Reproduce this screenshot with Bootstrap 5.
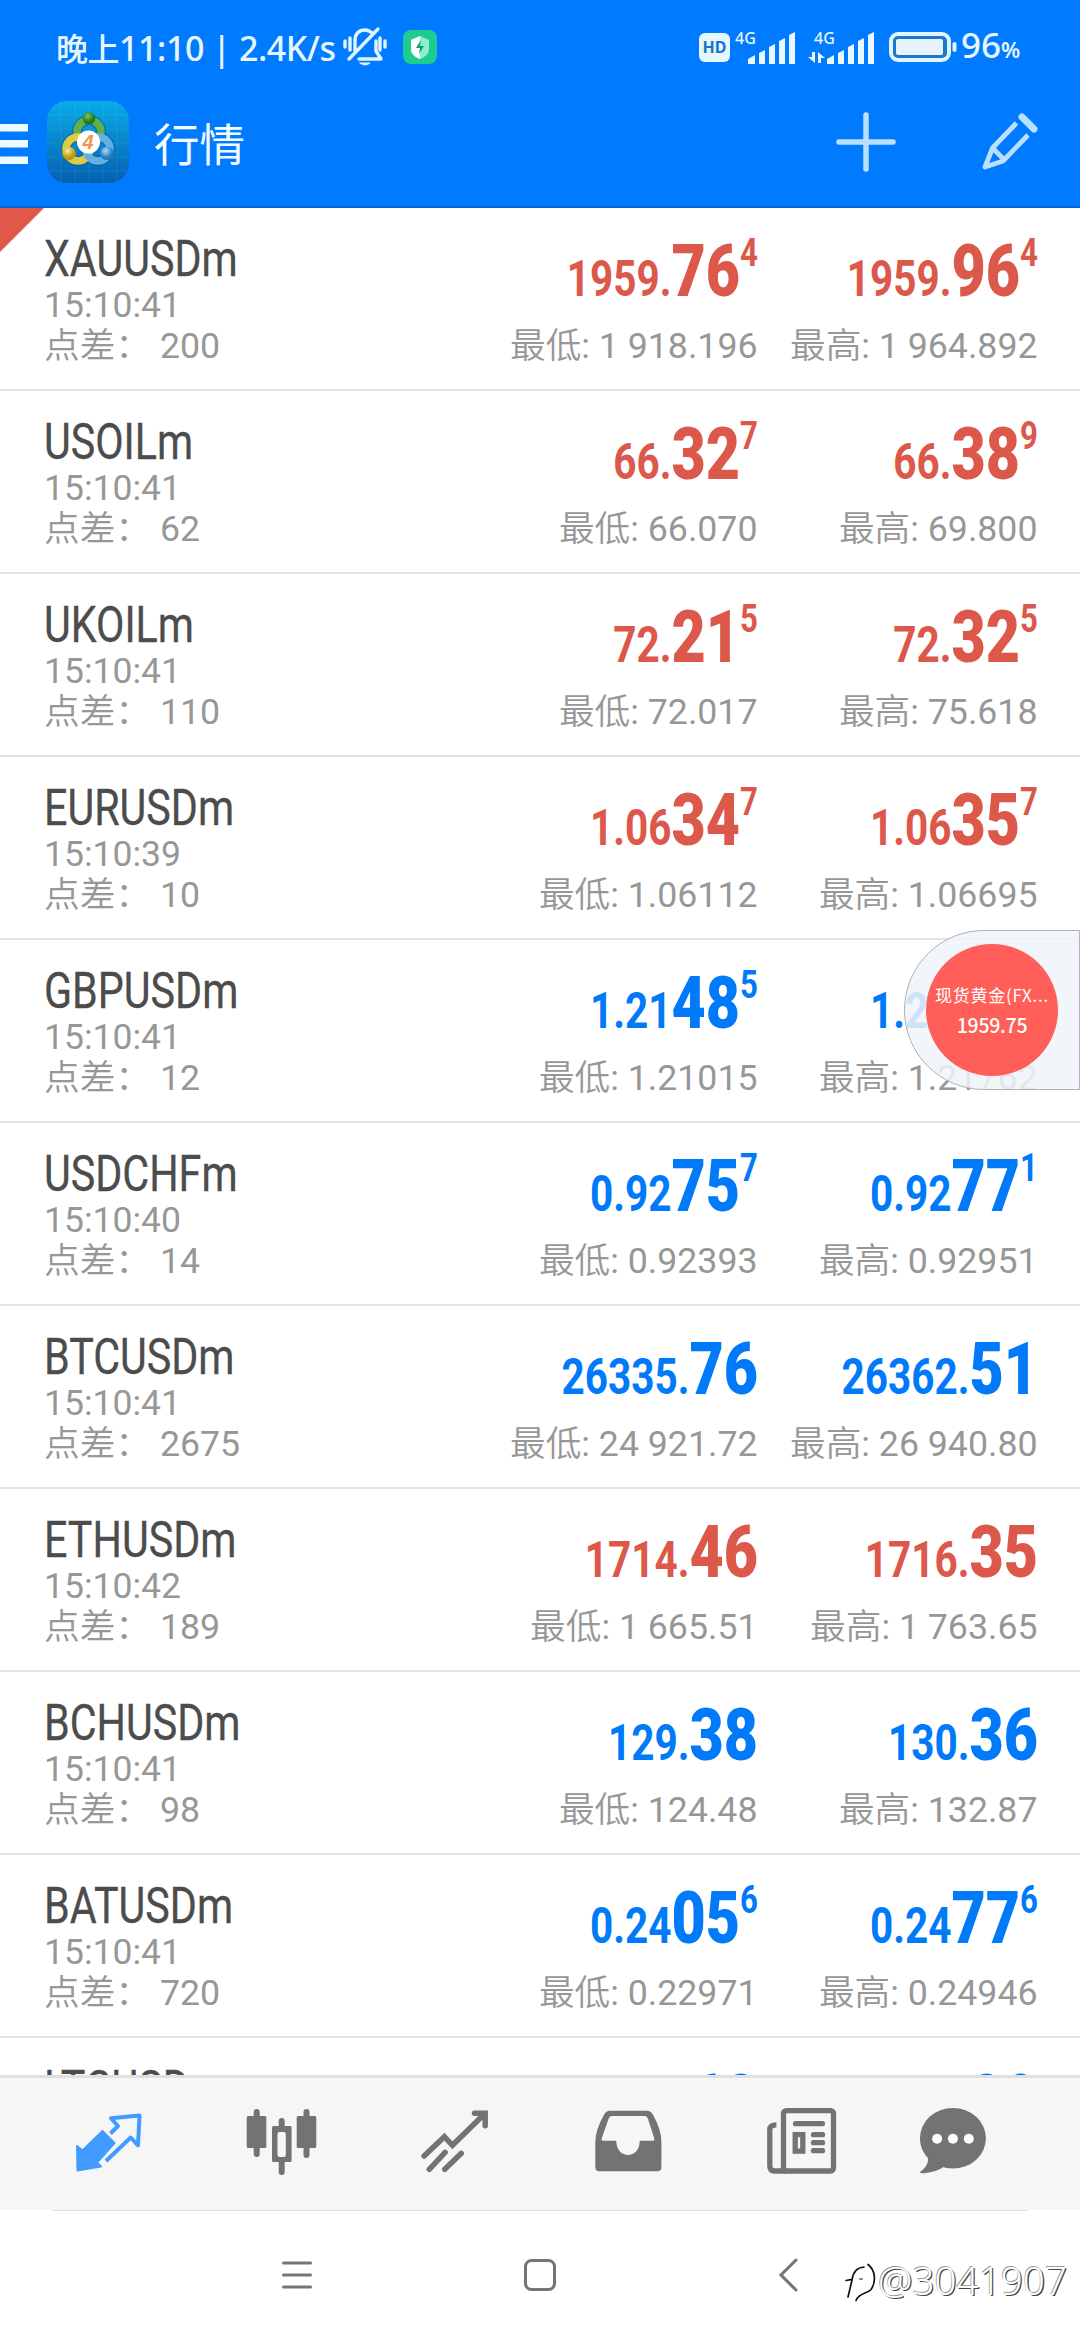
<!DOCTYPE html>
<html lang="zh-CN">
<head>
<meta charset="utf-8">
<meta name="viewport" content="width=device-width, initial-scale=1">
<title>行情</title>
<link href="https://cdn.jsdelivr.net/npm/bootstrap@5.3.0/dist/css/bootstrap.min.css" rel="stylesheet">
<style>
html,body{height:100%}
body{font-family:Roboto,"Noto Sans CJK SC",sans-serif;background:#fff;overflow:hidden;width:1080px}
svg{display:block;flex:none;overflow:visible}
.screen{height:2340px;width:1080px}
.topbar{background:#007aff;height:208px;color:#e6f7ff;flex:none;box-shadow:inset 0 -2px 1px #0a63d0}
.statusbar{height:94px;padding-left:56px}
.clock{font:500 34px/94px "Noto Sans","Noto Sans CJK SC",sans-serif;width:287px;white-space:pre;letter-spacing:-.45px}
.clock .cjk{font-family:"Noto Sans CJK SC",sans-serif;font-size:32px}
.net{font:500 16px/16px "Noto Sans",sans-serif}
.batt{font:500 35px/94px "Noto Sans",sans-serif;margin-left:4px}
.batt .pct{font-size:22px;font-weight:600}
.appbar{height:96px}
.app-title{font-size:45.5px;line-height:96px;font-family:"Noto Sans CJK SC",sans-serif;color:#f4fbff;margin-left:25px}
.quotes{flex:none;height:1867px;overflow:hidden}
.quote{height:183px;border-bottom:2px solid #e2e2e2;padding:0 42.5px 0 44px;color:#979797;font-size:35.5px;flex:none}
.quote.flagged::before{content:"";position:absolute;left:0;top:0;border:22px solid transparent;border-top-color:#e0584a;border-left-color:#e0584a}
.info{width:387px;padding-top:23px;white-space:pre}
.sym{font-size:50px;line-height:56px;color:#4c4c4c;transform:scaleX(.825);transform-origin:0 0;-webkit-text-stroke:.3px #4c4c4c}
.tm{line-height:36px}
.rng{line-height:46px;font-weight:400;font-size:35.7px;white-space:pre}
.rng span{font-weight:350}
.side{width:280px;padding-top:29px;text-align:right}
.quote .first{margin-left:auto}
.px{font-size:50px;line-height:84px;margin-bottom:2px;font-weight:700;transform:scaleX(.81);transform-origin:100% 0;white-space:nowrap}
.px b,.px i{line-height:0;font-style:normal}
.px b{font-size:73px}
.px i{font-size:38.5px;vertical-align:30px}
.dn{color:#db584a}.up{color:#007af8}
.tabs{flex:none;height:135px;border-top:3px solid #e0e0e0;background:#f6f6f6;padding-left:22px;color:#737373}
.tab-item{width:173px}
.tab-item:last-child{width:132px}
.sysnav{height:130px;color:#757575}
.hair{width:974px;height:1px;background:#ddd}
.floater{position:absolute;left:904px;top:930px;width:176px;height:160px;border:1px solid #adb1b8;border-radius:80px 0 0 80px;background:rgba(240,243,249,.86)}
.ball{width:132px;height:132px;margin:13px 0 0 21px;background:#ff5f58;color:#fff;white-space:nowrap;font-family:"Noto Sans CJK SC",sans-serif}
.ball .t1{font-size:17px;line-height:24px;letter-spacing:.75px}
.ball .t2{font-size:19.5px;line-height:24px;margin-top:6px;font-weight:500;letter-spacing:-.3px}
.wm{position:absolute;left:840px;top:2253px;font:300 38.7px/54px "Noto Sans",sans-serif;color:#fff;text-shadow:-.7px -.7px 0 #999,1.3px 1.3px 0 #444;white-space:nowrap}
</style>
<script src="https://cdn.jsdelivr.net/npm/bootstrap@5.3.0/dist/js/bootstrap.bundle.min.js"></script>
</head>
<body>
<div class="screen d-flex flex-column position-relative">
<header class="topbar">
  <div class="statusbar d-flex align-items-center">
    <div class="clock"><span class="cjk">晚上</span>11:10 | 2.4K/s</div>
    <svg width="44" height="40" viewBox="0 0 44 40" fill="none" stroke="#dff5ff" stroke-width="3.4" stroke-linecap="round" stroke-linejoin="round"><path d="M2 14v6M7 11v12M42 14v6M37 11v12"/><path d="M12 24V13c0-6 4-10 10-10 3 0 5 1 7 3M6 32 35 2M16 32h22l-5-8V14"/><path d="M17 36h10q-5 4-10 0z" fill="#dff5ff" stroke-width="1"/></svg>
    <svg width="34" height="34" viewBox="0 0 34 34" style="margin-left:16px"><rect width="34" height="34" rx="8" fill="#1ecb90"/><path d="M17 6l9 4v9c0 5-4 8-9 10-5-2-9-5-9-10v-9z" fill="#8df0c8"/><path d="M17 6v23c-5-2-9-5-9-10v-9z" fill="#fff"/><path d="M18 10l-5 8h4l-1 6 5-8h-4z" fill="#139e6c"/></svg>
    <svg width="31" height="29" viewBox="0 0 31 29" style="margin-left:262px"><rect width="31" height="29" rx="6" fill="#e6f7ff"/><text x="15.5" y="20" text-anchor="middle" font-family="Noto Sans" font-weight="700" font-size="16" fill="#1574cf">HD</text></svg>
    <svg width="64" height="34" viewBox="734 29 64 34" fill="#e6f7ff" style="margin-left:4px"><text class="net" x="735" y="43">4G</text><path d="M748 63v-5l7-4v9zM759 63V52l6-3v14zM769 63V46l6-3v20zM779 63V40l6-3v26zM789 63V34l6-3v32z"/></svg>
    <svg width="78" height="34" viewBox="800 29 78 34" fill="#e6f7ff" style="margin-left:2px"><text class="net" x="814" y="43">4G</text><path d="M827 63v-5l7-4v9zM838 63V52l6-3v14zM848 63V46l6-3v20zM858 63V40l6-3v26zM868 63V34l6-3v32zM812 51h3v11l-7-6h4zM818 62V51l7 6h-4v5z"/></svg>
    <svg width="68" height="30" viewBox="0 0 68 30" style="margin-left:11px"><rect x="2" y="2" width="58" height="26" rx="7" fill="#1c78cc" stroke="#e0f5ff" stroke-width="4"/><rect x="7" y="7" width="47" height="16" rx="2" fill="#e6f3fd"/><rect x="63.500" y="10" width="4" height="10" rx="2" fill="#e0f5ff"/></svg>
    <div class="batt"><span class="d-inline-block">96</span><span class="pct">%</span></div>
  </div>
  <div class="appbar d-flex align-items-center">
    <svg width="28" height="40" fill="#effaff" style="margin-top:4px"><path d="M0 0h28v7.500H0zM0 16h28v7.500H0zM0 32.500h28V40H0z"/></svg>
    <svg width="82" height="82" viewBox="0 0 82 82" style="margin-left:19px">
      <defs><linearGradient id="g" x2="0" y2="1"><stop stop-color="#08ace8"/><stop offset="1" stop-color="#0560b0"/></linearGradient>
      <radialGradient id="gg" cx=".4" cy=".3"><stop stop-color="#7fc65a"/><stop offset="1" stop-color="#1f7a1c"/></radialGradient>
      <radialGradient id="gy" cx=".4" cy=".3"><stop stop-color="#fff08a"/><stop offset="1" stop-color="#b79a16"/></radialGradient>
      <radialGradient id="gb" cx=".4" cy=".3"><stop stop-color="#a8e0ff"/><stop offset="1" stop-color="#2478c0"/></radialGradient></defs>
      <rect width="82" height="82" rx="20" fill="url(#g)"/>
      <path d="M14 0v82M28 0v82M42 0v82M56 0v82M70 0v82M0 14h82M0 28h82M0 42h82M0 56h82M0 70h82" stroke="#fff" stroke-opacity=".07"/>
      <g fill="none" stroke-width="10" stroke="#0b4f7c" stroke-opacity=".5"><circle cx="42" cy="31" r="12"/><circle cx="31" cy="48" r="12"/><circle cx="51" cy="48" r="12"/></g>
      <g fill="none" stroke-width="7.500"><circle cx="42" cy="31" r="12" stroke="#62b04c"/><circle cx="31" cy="48" r="12" stroke="#dccb45"/><circle cx="51" cy="48" r="12" stroke="#62b0e6"/></g>
      <circle cx="42" cy="17.500" r="6.200" fill="url(#gg)"/><circle cx="22" cy="52.500" r="6.800" fill="url(#gy)"/><circle cx="60" cy="52.500" r="6.800" fill="url(#gb)"/>
      <circle cx="41.500" cy="41" r="11.500" fill="#fff"/><text x="41" y="48" text-anchor="middle" font-family="Liberation Sans" font-size="20" font-weight="700" font-style="italic" fill="#f0954a">4</text></svg>
    <div class="app-title">行情</div>
    <svg class="ms-auto" width="60" height="60" viewBox="0 0 60 60" stroke="#b9e0ff" stroke-width="5.500" stroke-linecap="round"><path d="M3 30h54M30 3v54"/></svg>
    <svg width="56" height="56" viewBox="0 0 56 56" fill="none" stroke="#b9e0ff" stroke-width="4.800" stroke-linejoin="round" style="margin:0 42.500px 0 86px"><path d="M34.500 9 10.500 34 3 53l18-6L46 21M10.500 34l10 10"/><path d="M40 3l12 12" stroke-width="7" stroke-linecap="round"/></svg>
  </div>
</header>
<main class="quotes d-flex flex-column" id="quotes"></main>
<nav class="tabs d-flex align-items-center">
  <div class="tab-item d-flex justify-content-center"><svg width="80" height="80" stroke="#429bff" stroke-width="4" stroke-linejoin="round" stroke-linecap="butt"><path fill="#429bff" stroke-width="2" d="M8 42l5.500 4.500 20-19.500 12 12L28 58.500l4 4L8.500 66.500z"/><path fill="none" d="M41.500 29.500l7.500-7.500-7-7.800L70.500 11.500 69 41.300l-7.300-7.800L37 57"/></svg></div>
  <div class="tab-item d-flex justify-content-center"><svg width="80" height="80" fill="currentColor" stroke="currentColor" stroke-width="6" stroke-linecap="round"><path d="M14.700 8v42M64.500 8v43M39.700 17v7M39.700 58v10"/><g stroke="none"><rect x="4.700" y="12" width="19.600" height="32" rx="1.500"/><rect x="54.700" y="12" width="19.600" height="32" rx="1.500"/><rect x="30" y="22" width="19.600" height="36" rx="1.500"/><rect x="35.500" y="28" width="8.300" height="25" rx="2" fill="#f6f6f6"/></g></svg></div>
  <div class="tab-item d-flex justify-content-center"><svg width="80" height="80" fill="none" stroke="currentColor" stroke-width="5.500" stroke-linecap="round"><path d="M9.100 52 29.400 32.700l8 8.600L69.400 10M59.500 9.300h10.700v12.400M14.300 65.300l15.800-17M29.800 65.300l16.500-16"/></svg></div>
  <div class="tab-item d-flex justify-content-center"><svg width="80" height="80" fill="currentColor"><path fill-rule="evenodd" d="M22 6.700h37q4 0 6 4 8.400 15 8.400 27V63q0 4.300-4 4.300H11.300q-4 0-4-4.300V38Q7.300 26 16 10.700q2-4 6-4zM24 12q-2.500 0-3.500 3l-6.700 19q-.8 2.700 1 2.700h13.500C28.300 46 34 51 40 51s11.700-5 11.700-14.300h13.500q1.800 0 1-2.700L60 15q-1-3-3.500-3z"/></svg></div>
  <div class="tab-item d-flex justify-content-center"><svg width="80" height="80" fill="none" stroke="currentColor" stroke-width="5.300" stroke-linecap="round"><rect x="22.500" y="6.600" width="50" height="60.400" rx="3"/><path stroke-linecap="butt" d="M15.400 20.800q-6.600 0-6.600 5V62q0 5 5 5h12"/><path d="M34.600 19.700h26.800M52.500 30.700h9M52.500 38.700h9M52.500 46.700h9"/><rect x="34.200" y="30.600" width="7.600" height="16.500"/></svg></div>
  <div class="tab-item d-flex justify-content-center"><svg width="80" height="80" fill="currentColor"><ellipse cx="39.900" cy="34.300" rx="33" ry="30.300"/><path d="M14 50q4 10-7 18 0 1.500 4 1.300Q24 68 32 62z"/><g fill="#fff"><circle cx="24.100" cy="34.700" r="5"/><circle cx="39.900" cy="34.700" r="5"/><circle cx="55.800" cy="34.700" r="5"/></g></svg></div>
</nav>
<footer class="sysnav">
  <div class="hair mx-auto"></div>
  <div class="d-flex align-items-center" style="height:128px">
    <svg width="32" height="32" viewBox="0 0 32 32" stroke="currentColor" stroke-width="3" stroke-linecap="round" style="margin-left:281px"><path d="M2.500 4h27M2.500 16h27M2.500 28h27"/></svg>
    <svg width="32" height="32" fill="none" stroke="currentColor" stroke-width="3" style="margin-left:211px"><rect x="1.500" y="1.500" width="29" height="29" rx="6"/></svg>
    <svg width="20" height="34" fill="none" stroke="currentColor" stroke-width="3" stroke-linecap="round" style="margin-left:222px"><path d="M18 2 3 17l15 15"/></svg>
  </div>
</footer>
<div class="floater"><div class="ball rounded-circle d-flex flex-column align-items-center justify-content-center"><div class="t1">现货黄金(FX...</div><div class="t2">1959.75</div></div></div>
<div class="wm d-flex align-items-center">
  <svg width="38" height="48" viewBox="840 2258 38 48" fill="none" stroke="#111" stroke-width="1.700" stroke-linecap="round"><path d="M846 2282.500l6-1.200M848 2299l4-17c1-8 5-12.500 12-13"/><path d="M868 2266.500c8 6 8 18 3 25-3 4-12 3-15 11"/><path d="M859.500 2281h3" stroke-width="1"/></svg>
  <span>@3041907</span>
</div>
</div>
<script>
// symbol, time, spread, direction, bid [small, big, pip], ask, low, high
const rows = [
 ["XAUUSDm","15:10:41","200","dn",["1959.","76","4"],["1959.","96","4"],"1 918.196","1 964.892"],
 ["USOILm","15:10:41","62","dn",["66.","32","7"],["66.","38","9"],"66.070","69.800"],
 ["UKOILm","15:10:41","110","dn",["72.","21","5"],["72.","32","5"],"72.017","75.618"],
 ["EURUSDm","15:10:39","10","dn",["1.06","34","7"],["1.06","35","7"],"1.06112","1.06695"],
 ["GBPUSDm","15:10:41","12","up",["1.21","48","5"],["1.21","49","7"],"1.21015","1.21762"],
 ["USDCHFm","15:10:40","14","up",["0.92","75","7"],["0.92","77","1"],"0.92393","0.92951"],
 ["BTCUSDm","15:10:41","2675","up",["26335.","76",""],["26362.","51",""],"24 921.72","26 940.80"],
 ["ETHUSDm","15:10:42","189","dn",["1714.","46",""],["1716.","35",""],"1 665.51","1 763.65"],
 ["BCHUSDm","15:10:41","98","up",["129.","38",""],["130.","36",""],"124.48","132.87"],
 ["BATUSDm","15:10:41","720","up",["0.24","05","6"],["0.24","77","6"],"0.22971","0.24946"],
 ["LTCUSDm","15:10:41","","up",["87.","68",""],["87.","89",""],"",""]
];
const side = (cls, dir, p, label, v) =>
 `<div class="side ${cls}"><div class="px ${dir}">${p[0]}<b>${p[1]}</b>${p[2] ? `<i>${p[2]}</i>` : ""}</div>${v ? `<div class="rng"><span>${label}</span>: ${v}</div>` : ""}</div>`;
document.getElementById("quotes").innerHTML = rows.map((r, i) =>
 `<div class="quote d-flex position-relative${i ? "" : " flagged"}"><div class="info"><div class="sym">${r[0]}</div>${r[2] ? `<div class="tm">${r[1]}</div><div class="rng"><span>点差：</span> ${r[2]}</div>` : ""}</div>${side("first", r[3], r[4], "最低", r[6])}${side("", r[3], r[5], "最高", r[7])}</div>`).join("");
</script>
</body>
</html>
